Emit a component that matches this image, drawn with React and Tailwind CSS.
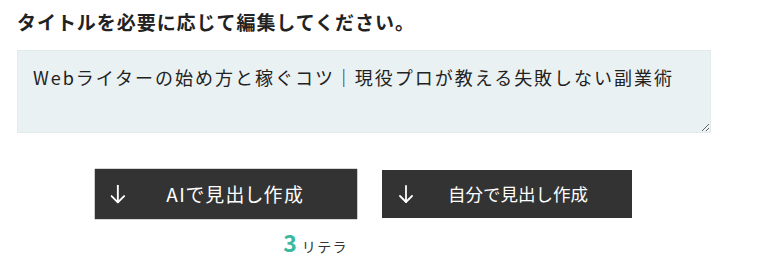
import React, { useState } from "react";

const FONT = { fontFamily: '"Noto Sans CJK JP", "Noto Sans", sans-serif' };

function ArrowDown() {
    return (
        <svg width="14" height="18" viewBox="0 0 14 18" fill="none" stroke="currentColor" strokeWidth="1.8" strokeLinecap="round" strokeLinejoin="round">
            <path d="M7 1v16" />
            <path d="M1 11l6 6 6-6" />
        </svg>
    );
}

export default function App() {
    const [title, setTitle] = useState("Webライターの始め方と稼ぐコツ｜現役プロが教える失敗しない副業術");

    return (
        <div className="w-[778px] h-[270px] bg-white text-[#222] overflow-hidden" style={FONT}>
            <div className="pl-[17px] pt-[9px]">
                <h2 className="text-[19px] leading-[26px] font-bold tracking-[0.05em] text-[#222]">
                    タイトルを必要に応じて編集してください。
                </h2>

                <textarea
                    value={title}
                    spellCheck={false}
                    onChange={(e) => setTitle(e.target.value)}
                    className="mt-[15px] block w-[694px] h-[83px] bg-[#eaf1f3] border border-[#e2eaec] px-[15px] pt-[11px] text-[18px] leading-[30px] tracking-[0.11em] text-[#222] outline-none resize"
                    style={FONT}
                />

                {/* Buttons */}
                <div className="w-[694px] flex justify-center gap-[31px] pl-[5px] mt-[37px]">
                    <div className="flex flex-col items-end">
                        <button className="w-[250px] h-[48px] bg-[#333] text-white flex items-center pl-[15px] scale-[1.05] text-[18px] tracking-[0.08em] [font-feature-settings:'palt']">
                            <ArrowDown />
                            <span className="ml-[39px]">AIで見出し作成</span>
                        </button>
                        <div className="mt-[11px] mr-[3px] flex items-baseline gap-[5px]">
                            <span className="text-[23px] leading-[26px] font-bold text-[#3db89f]">3</span>
                            <span className="text-[14px] tracking-[0.1em] text-[#333]">リテラ</span>
                        </div>
                    </div>
                    <button className="w-[250px] h-[48px] bg-[#333] text-white flex items-center pl-[17px] text-[17.5px]">
                        <ArrowDown />
                        <span className="ml-[35px]">自分で見出し作成</span>
                    </button>
                </div>
            </div>
        </div>
    );
}
